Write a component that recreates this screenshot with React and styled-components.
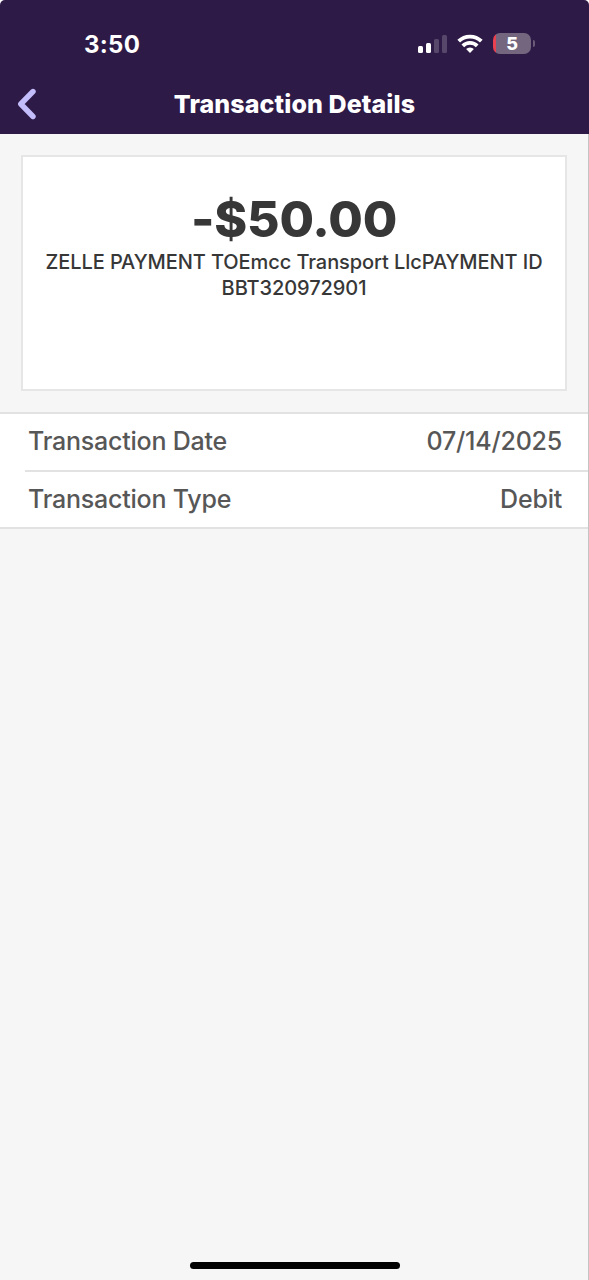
import styled, { createGlobalStyle } from "styled-components";

const colors = {
  header: "#2e1a47",
  chevron: "#c3bdfb",
  page: "#f6f6f6",
  line: "#e2e2e2",
  dark: "#373737",
  grey: "#575757",
};

const GlobalStyle = createGlobalStyle`
  * {
    box-sizing: border-box;
  }
  body {
    margin: 0;
    background-color: white;
    font-family: Inter, "Liberation Sans", sans-serif;
  }
`;

const Screen = styled.div`
  display: flex;
  flex-direction: column;
  height: 1280px;
  background-color: ${colors.page};
  border-radius: 5px 5px 0 0;
  overflow: hidden;
`;

const Header = styled.header`
  height: 134px;
  background-color: ${colors.header};
  color: white;
`;

const StatusBar = styled.div`
  display: flex;
  align-items: center;
  justify-content: space-between;
  height: 74px;
  padding: 13px 54px 0 84px;
`;

const Time = styled.span`
  padding-top: 2px;
  font-size: 24px;
  font-weight: 700;
  line-height: 30px;
  letter-spacing: 0.3px;
`;

const StatusIcons = styled.div`
  display: flex;
  align-items: center;
  gap: 10px;
`;

const BatteryGroup = styled.div`
  display: flex;
  align-items: center;
  gap: 2px;
`;

const Battery = styled.div`
  display: flex;
  align-items: center;
  justify-content: center;
  width: 38px;
  height: 21px;
  border-radius: 7px;
  background: linear-gradient(to right, #e8414f 3px, #74667f 3px);
  font-size: 18px;
  font-weight: 800;
  line-height: 21px;
`;

const BatteryTip = styled.div`
  width: 2px;
  height: 7px;
  border-radius: 0 2px 2px 0;
  background-color: #6a5c78;
`;

const NavBar = styled.div`
  display: grid;
  grid-template-columns: 60px 1fr 60px;
  align-items: center;
  height: 60px;
`;

const BackButton = styled.button`
  display: flex;
  padding: 0 0 0 15px;
  border: 0;
  background: none;
  cursor: pointer;
`;

const Title = styled.h1`
  margin: 0;
  font-size: 25px;
  font-weight: 800;
  line-height: 30px;
  letter-spacing: 0.1px;
  text-align: center;
  white-space: nowrap;
`;

const Content = styled.main`
  flex: 1;
  display: flex;
  flex-direction: column;
  border-right: 1px solid #c4c4c4;
`;

const Card = styled.section`
  height: 236px;
  margin: 21px;
  padding: 32px 20px 0;
  border: 2px solid #e6e6e6;
  background-color: white;
  color: ${colors.dark};
  text-align: center;
`;

const Amount = styled.div`
  font-size: 50px;
  font-weight: 800;
  line-height: 60px;
  letter-spacing: -0.2px;
`;

const Description = styled.p`
  margin: 0;
  font-size: 20px;
  font-weight: 500;
  line-height: 26px;
  letter-spacing: -0.08px;
`;

const List = styled.dl`
  margin: 0;
  border-top: 2px solid ${colors.line};
  border-bottom: 2px solid ${colors.line};
  background-color: white;
`;

const Row = styled.div`
  display: flex;
  align-items: center;
  justify-content: space-between;
  height: ${({ $divided }) => ($divided ? "57px" : "56px")};
  margin-left: 25px;
  padding: 0 26px 2px 3px;
  border-top: ${({ $divided }) => ($divided ? `2px solid ${colors.line}` : "0")};
  color: ${colors.grey};
  font-size: 25px;
  font-weight: 500;
  line-height: 30px;
  letter-spacing: -0.22px;
`;

const Label = styled.dt``;

const Value = styled.dd`
  margin: 0;
`;

const HomeIndicator = styled.div`
  width: 210px;
  height: 7px;
  margin: auto 188px 11px 190px;
  border-radius: 4px;
  background-color: black;
`;

const details = [
  { label: "Transaction Date", value: "07/14/2025" },
  { label: "Transaction Type", value: "Debit" },
];

function Signal() {
  return (
    <svg width="30" height="20" viewBox="0 0 30 20" fill="white">
      <rect x="1" y="12" width="5" height="7" rx="1.5" />
      <rect x="9" y="9" width="5" height="10" rx="1.5" />
      <rect x="17" y="5" width="5" height="14" rx="1.5" opacity="0.2" />
      <rect x="25" y="1" width="5" height="18" rx="1.5" opacity="0.2" />
    </svg>
  );
}

function Wifi() {
  return (
    <svg width="26" height="20" viewBox="0 0 26 20" fill="none" stroke="white" strokeWidth="3.8">
      <path d="M1.7 7.2a16 16 0 0 1 22.6 0" />
      <path d="M5.8 11.8a10.2 10.2 0 0 1 14.4 0" />
      <path d="M13 19l-3.9-3.9a5.5 5.5 0 0 1 7.8 0z" fill="white" stroke="none" />
    </svg>
  );
}

export default function App() {
  return (
    <>
      <GlobalStyle />
      <Screen>
        <Header>
          <StatusBar>
            <Time>3:50</Time>
            <StatusIcons>
              <Signal />
              <Wifi />
              <BatteryGroup>
                <Battery>5</Battery>
                <BatteryTip />
              </BatteryGroup>
            </StatusIcons>
          </StatusBar>
          <NavBar>
            <BackButton aria-label="Back">
              <svg width="22" height="32" viewBox="0 0 22 32" fill="none">
                <path
                  d="M18 3.5L5.8 16 18 28.5"
                  stroke={colors.chevron}
                  strokeWidth="5.4"
                  strokeLinecap="round"
                  strokeLinejoin="round"
                />
              </svg>
            </BackButton>
            <Title>Transaction Details</Title>
          </NavBar>
        </Header>
        <Content>
          <Card>
            <Amount>-$50.00</Amount>
            <Description>
              ZELLE PAYMENT TOEmcc Transport LlcPAYMENT ID BBT320972901
            </Description>
          </Card>
          <List>
            {details.map(({ label, value }, index) => (
              <Row key={label} $divided={index > 0}>
                <Label>{label}</Label>
                <Value>{value}</Value>
              </Row>
            ))}
          </List>
          <HomeIndicator />
        </Content>
      </Screen>
    </>
  );
}
